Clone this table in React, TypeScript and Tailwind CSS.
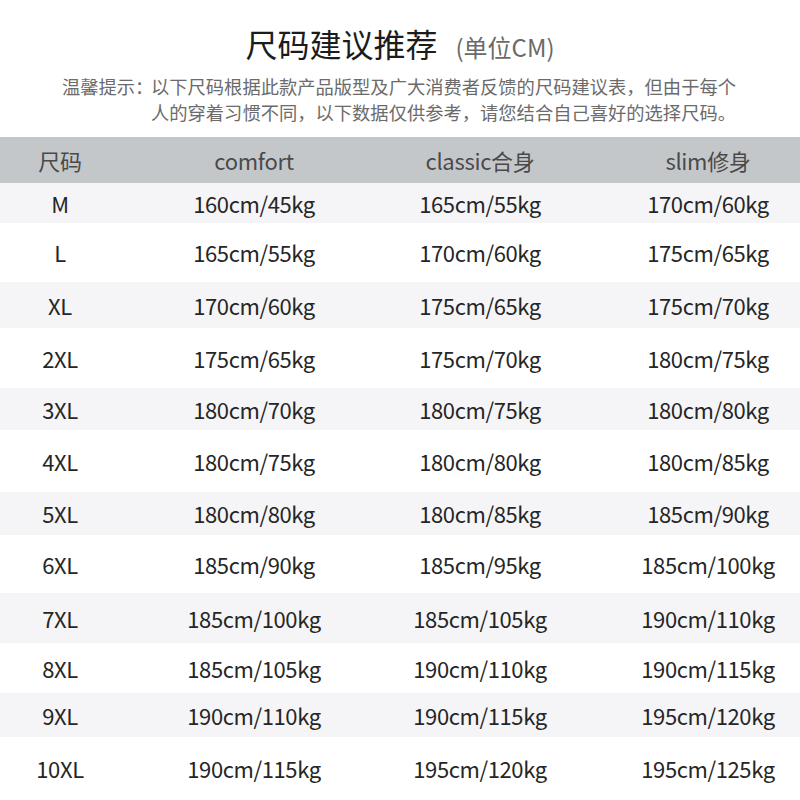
import React from 'react';

const rows: { size: string; comfort: string; classic: string; slim: string; h: number }[] = [
  { size: 'M', comfort: '160cm/45kg', classic: '165cm/55kg', slim: '170cm/60kg', h: 40 },
  { size: 'L', comfort: '165cm/55kg', classic: '170cm/60kg', slim: '175cm/65kg', h: 59 },
  { size: 'XL', comfort: '170cm/60kg', classic: '175cm/65kg', slim: '175cm/70kg', h: 46 },
  { size: '2XL', comfort: '175cm/65kg', classic: '175cm/70kg', slim: '180cm/75kg', h: 60 },
  { size: '3XL', comfort: '180cm/70kg', classic: '180cm/75kg', slim: '180cm/80kg', h: 42 },
  { size: '4XL', comfort: '180cm/75kg', classic: '180cm/80kg', slim: '180cm/85kg', h: 62 },
  { size: '5XL', comfort: '180cm/80kg', classic: '180cm/85kg', slim: '185cm/90kg', h: 43 },
  { size: '6XL', comfort: '185cm/90kg', classic: '185cm/95kg', slim: '185cm/100kg', h: 58 },
  { size: '7XL', comfort: '185cm/100kg', classic: '185cm/105kg', slim: '190cm/110kg', h: 50 },
  { size: '8XL', comfort: '185cm/105kg', classic: '190cm/110kg', slim: '190cm/115kg', h: 50 },
  { size: '9XL', comfort: '190cm/110kg', classic: '190cm/115kg', slim: '195cm/120kg', h: 44 },
  { size: '10XL', comfort: '190cm/115kg', classic: '195cm/120kg', slim: '195cm/125kg', h: 63 },
];

const cols = 'grid grid-cols-[120px_268px_184px_228px] items-center';

export default function App() {
  return (
    <div className="w-[800px] h-[800px] overflow-hidden bg-white font-['Noto_Sans_CJK_SC',sans-serif]">
      {/* Title */}
      <div className="pt-[23px] h-[64px] flex items-baseline justify-center">
        <span className="text-[32px] leading-[40px] text-[#1c1c1c]">尺码建议推荐</span>
        <span className="ml-[18px] text-[24px] leading-[40px] text-[#6a6a6a]">(单位CM)</span>
      </div>

      {/* Note */}
      <div className="mt-[9px] flex pl-[62px] text-[18.3px] leading-[26px] text-[#6b6b6b] whitespace-nowrap">
        <span className="w-[89px] shrink-0">温馨提示：</span>
        <div>
          以下尺码根据此款产品版型及广大消费者反馈的尺码建议表，但由于每个
          <br />
          人的穿着习惯不同，以下数据仅供参考，请您结合自己喜好的选择尺码。
        </div>
      </div>

      {/* Table */}
      <div className="mt-[12px]">
        <div className={`${cols} h-[46px] bg-[#c4c7ca] text-[22px] tracking-[-0.3px] text-[#4a4a4a]`}>
          <div className="text-center">尺码</div>
          <div className="text-center">comfort</div>
          <div className="text-center">classic合身</div>
          <div className="text-center pl-[44px]">slim修身</div>
        </div>
        {rows.map((r, i) => (
          <div
            key={r.size}
            className={`${cols} text-[22px] tracking-[-0.4px] text-[#262626] ${i % 2 === 0 ? 'bg-[#f5f5f7]' : 'bg-white'}`}
            style={{ height: r.h }}
          >
            <div className="text-center">{r.size}</div>
            <div className="text-center">{r.comfort}</div>
            <div className="text-center">{r.classic}</div>
            <div className="text-center pl-[44px]">{r.slim}</div>
          </div>
        ))}
      </div>
    </div>
  );
}
